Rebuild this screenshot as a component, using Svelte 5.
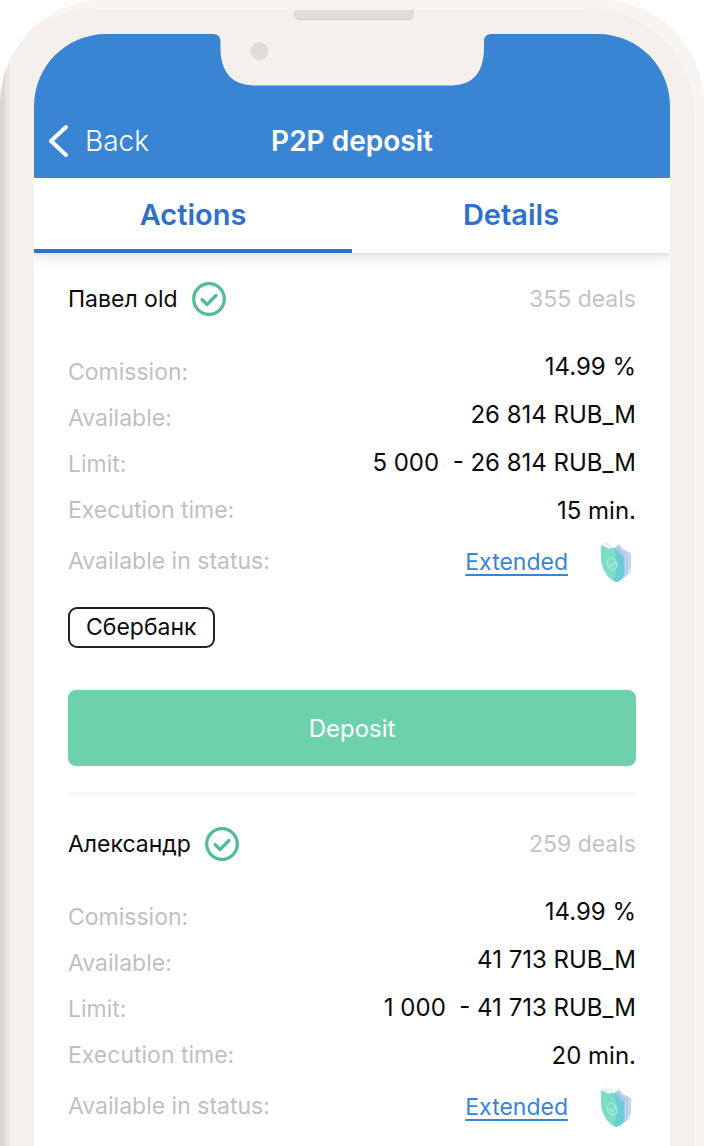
<script>
	let activeTab = $state('Actions');
	const tabs = ['Actions', 'Details'];

	const offers = [
		{
			name: 'Павел old',
			deals: 355,
			values: ['14.99 %', '26 814 RUB_M', '5 000\u00a0 - 26 814 RUB_M', '15 min.'],
			bank: 'Сбербанк'
		},
		{
			name: 'Александр',
			deals: 259,
			values: ['14.99 %', '41 713 RUB_M', '1 000\u00a0 - 41 713 RUB_M', '20 min.']
		}
	];
	const labels = ['Comission:', 'Available:', 'Limit:', 'Execution time:', 'Available in status:'];
</script>

<div class="phone">
	<div class="speaker"></div>
	<svg class="notch" width="278" height="52" viewBox="0 0 278 52" aria-hidden="true">
		<path
			d="M0 0H278Q271 0 271 8V14C271 38 260 51.500 238 51.500H42C19 51.500 7.500 38 7.500 14V8Q7.500 0 0 0Z"
			fill="#f5f0ec"
		/>
		<circle cx="46.500" cy="17" r="9" fill="#e0dcd8" />
	</svg>

	<div class="screen">
		<header>
			<button class="back">
				<svg width="20" height="34" viewBox="0 0 20 34" aria-hidden="true">
					<path d="M17 3L2 17L17 31" fill="none" stroke="#fff" stroke-width="4" stroke-linecap="round" stroke-linejoin="round" />
				</svg>
				Back
			</button>
			<h1>P2P deposit</h1>
		</header>

		<nav>
			{#each tabs as tab}
				<button class="tab" class:active={activeTab === tab} onclick={() => (activeTab = tab)}>{tab}</button>
			{/each}
		</nav>

		<main>
			{#each offers as offer}
				<article>
					<div class="top">
						<h2>{offer.name}</h2>
						<svg width="34" height="34" viewBox="0 0 34 34" aria-hidden="true">
							<g fill="none" stroke="#50ba9b" stroke-width="3.200" stroke-linecap="round" stroke-linejoin="round">
								<circle cx="17" cy="17" r="15.300" />
								<path d="M10 17.500L15 22.500L24 13.500" />
							</g>
						</svg>
						<span class="deals">{offer.deals} deals</span>
					</div>

					<div class="info">
						<ul class="labels">
							{#each labels as label}
								<li>{label}</li>
							{/each}
						</ul>
						<ul class="values">
							{#each offer.values as value}
								<li>{value}</li>
							{/each}
							<li class="status">
								<a href="#status">Extended</a>
								<svg width="32" height="42" viewBox="0 0 32 42" aria-hidden="true">
									<path d="M14 7L19 3L23 8L31 12V27Q30 33 24 37L14 36Z" fill="#c3d3ee" />
									<path d="M14 8L18 5L22 10L28 13V29Q27 34 22 38L14 36Z" fill="#adc8ea" />
									<path d="M25.500 13V34M28.500 12V32" stroke="#d3dcf3" stroke-width="1" />
									<path d="M1 4L5 5L11 7L14 7L17 10L17 41Q10 40 5 31Q1 24 1 17Z" fill="#7bdec3" />
									<path d="M14 7L17 9Q20 14 24.500 16V32Q23 40 17 41L14 40L17 25Z" fill="#6bcbd7" />
									<path d="M1 4L5 1L8 2L11 3L13 6L9 8L5 6Z" fill="#eef2f4" />
									<ellipse cx="12" cy="23" rx="4.500" ry="6" transform="rotate(-20 12 23)" fill="none" stroke="#a4e8dc" stroke-width="1.500" />
									<path d="M9 22L12 25L16 21" fill="none" stroke="#b2eae2" stroke-width="1.500" />
								</svg>
							</li>
						</ul>
					</div>

					{#if offer.bank}
						<span class="bank">{offer.bank}</span>
						<button class="deposit">Deposit</button>
						<hr />
					{/if}
				</article>
			{/each}
		</main>
	</div>
</div>

<style>
	:global(body) {
		margin: 0;
		background: #fff;
	}
	.phone {
		position: relative;
		box-sizing: border-box;
		height: 100vh;
		overflow: hidden;
		padding: 34px 34px 0;
		border-radius: 104px 104px 0 0;
		background: linear-gradient(to right, #d9d4d0 0, #dfdad6 5px, #eae5e1 6px, #ece7e3 9px, #f5f0ec 10px);
		font-family: Inter, 'Liberation Sans', sans-serif;
		font-size: 23px;
		color: #0b0b0b;
	}
	/* lighter top and right side of the frame */
	.phone::before {
		content: '';
		position: absolute;
		inset: 0;
		border-radius: 104px 104px 0 0;
		box-shadow: inset -10px 9px 0 #f8f4f1;
	}
	.speaker {
		position: absolute;
		top: 10px;
		left: 50%;
		box-sizing: border-box;
		width: 120px;
		height: 10px;
		transform: translateX(-50%);
		margin-left: 2px;
		border-bottom: 1px solid #d1cdc9;
		border-radius: 0 0 6px 6px;
		background: #e0dcd8;
	}
	.notch {
		position: absolute;
		z-index: 2;
		top: 34px;
		left: 50%;
		transform: translateX(-50%);
	}
	.screen {
		position: relative;
		overflow: hidden;
		min-height: 100%;
		border-radius: 72px 72px 0 0;
		background: #fff;
	}
	button {
		padding: 0;
		border: none;
		background: none;
		font-family: inherit;
		cursor: pointer;
	}
	header {
		position: relative;
		z-index: 1;
		display: grid;
		grid-template-columns: 1fr auto 1fr;
		align-items: center;
		box-sizing: border-box;
		height: 144px;
		padding: 69px 15px 0;
		background: #3985d4;
		color: #fff;
	}
	.back {
		display: flex;
		align-items: center;
		gap: 16px;
		font-size: 28px;
		font-weight: 300;
		color: #fff;
	}
	h1 {
		margin: 0;
		font-size: 28px;
		font-weight: 600;
	}
	nav {
		display: flex;
		height: 75px;
		box-shadow:
			0 3px 2px #e2e6ea,
			0 8px 12px #eceff2;
	}
	.tab {
		flex: 1;
		padding-top: 2px;
		border-bottom: 4px solid transparent;
		font-size: 29px;
		font-weight: 600;
		color: #2f6fce;
	}
	.tab.active {
		border-color: #2f6fce;
	}
	main {
		padding: 28px 34px 0;
	}
	.top {
		display: flex;
		align-items: center;
		gap: 14px;
		height: 36px;
	}
	h2 {
		margin: 0;
		font-size: 23px;
		font-weight: 400;
	}
	.deals {
		margin-left: auto;
		color: #c3c3c5;
	}
	.info {
		display: flex;
		align-items: flex-end;
		justify-content: space-between;
		margin-top: 26px;
	}
	ul {
		margin: 0;
		padding: 0;
		list-style: none;
	}
	.labels {
		line-height: 46px;
		color: #bfbfc1;
	}
	.labels li:last-child {
		line-height: 56px;
	}
	.values {
		font-size: 24px;
		line-height: 48px;
		text-align: right;
	}
	.values .status {
		display: flex;
		align-items: center;
		justify-content: flex-end;
		gap: 32px;
		height: 54px;
		padding-right: 4px;
		font-size: 23px;
	}
	a {
		color: #3985d4;
		text-decoration-thickness: 2px;
		text-underline-offset: 4px;
	}
	.bank {
		display: block;
		box-sizing: border-box;
		width: fit-content;
		height: 41px;
		margin-top: 18px;
		padding: 0 16px;
		border: 2px solid #222;
		border-radius: 9px;
		line-height: 36px;
	}
	.deposit {
		display: block;
		width: 100%;
		height: 76px;
		margin-top: 42px;
		border-radius: 8px;
		background: #6dd2ab;
		font-size: 24px;
		color: #fff;
	}
	hr {
		height: 4px;
		margin: 26px 0 30px;
		border: none;
		background: #f9f9f9;
	}
</style>
